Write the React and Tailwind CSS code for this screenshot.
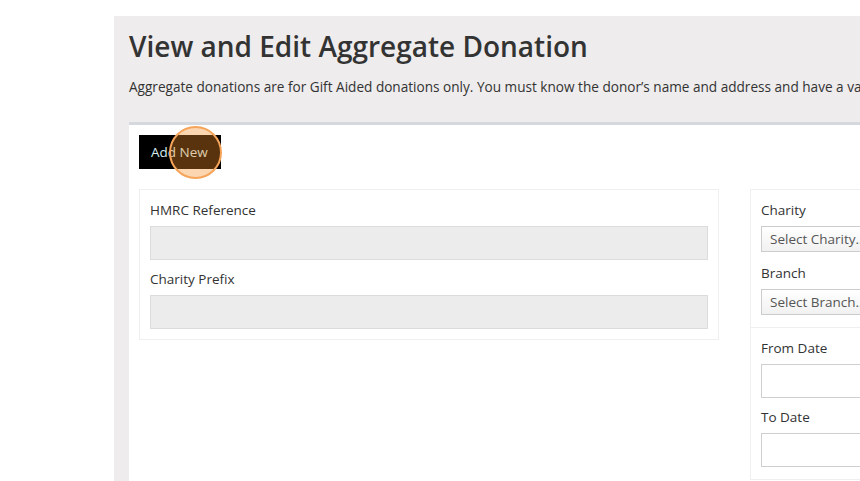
import React from 'react'

function Field({ label, children, first }) {
  return (
    <div className={first ? '' : 'mt-[9px]'}>
      <div className="text-[13.5px] leading-[20px] text-[#333]">{label}</div>
      <div className="mt-[6px]">{children}</div>
    </div>
  )
}

function GreyInput() {
  return <div className="h-[34px] bg-[#ececec] border border-[#dcdcdc]" />
}

function WhiteInput() {
  return <div className="h-[34px] w-[280px] bg-white border border-[#cfcfcf]" />
}

function SelectBox({ text }) {
  return (
    <div className="h-[26px] w-[280px] border border-[#cccccc] bg-gradient-to-b from-white to-[#f1f1f1] pl-[8px] text-[13.5px] leading-[24px] text-[#555]">
      {text}
    </div>
  )
}

export default function App() {
  return (
    <div
      className="w-[860px] h-[481px] overflow-hidden bg-white"
      style={{ fontFamily: '"Open Sans", "Liberation Sans", sans-serif' }}
    >
      <div className="ml-[114px] mt-[16px] w-[900px] h-[500px] bg-[#eeecec] pt-[12px] pl-[15px]">
        {/* Header */}
        <h1 className="text-[28px] leading-[36px] font-semibold text-[#333]">
          View and Edit Aggregate Donation
        </h1>
        <p className="mt-[14px] text-[13.6px] leading-[18px] text-[#333] whitespace-nowrap">
          Aggregate donations are for Gift Aided donations only. You must know the donor’s name and address and have a valid Gift Aid declaration.
        </p>

        {/* Content */}
        <div className="mt-[26px] h-[400px] bg-white border-t-[3px] border-[#d5d8dd] pl-[10px] pt-[10px]">
          <div className="relative w-[82px] h-[34px] bg-black text-[13.5px] leading-[34px] text-[#d6eef2] pl-[12px]">
            Add New
            <span className="absolute left-[30px] top-[-9px] w-[53px] h-[53px] rounded-full bg-[rgba(245,140,40,0.36)] border-2 border-[#f5a45a]" />
          </div>

          <div className="mt-[20px] flex items-start">
            <div className="w-[580px] shrink-0 border border-[#efefef] px-[10px] pt-[10px] pb-[10px]">
              <Field label="HMRC Reference" first>
                <GreyInput />
              </Field>
              <Field label="Charity Prefix">
                <GreyInput />
              </Field>
            </div>

            <div className="ml-[31px] w-[300px] shrink-0">
              <div className="border border-[#efefef] px-[10px] pt-[10px] pb-[12px]">
                <Field label="Charity" first>
                  <SelectBox text="Select Charity..." />
                </Field>
                <div className="mt-[11px]">
                  <div className="text-[13.5px] leading-[20px] text-[#333]">Branch</div>
                  <div className="mt-[6px]">
                    <SelectBox text="Select Branch..." />
                  </div>
                </div>
              </div>
              <div className="border border-t-0 border-[#efefef] px-[10px] pt-[10px] pb-[12px]">
                <Field label="From Date" first>
                  <WhiteInput />
                </Field>
                <Field label="To Date">
                  <WhiteInput />
                </Field>
              </div>
            </div>
          </div>
        </div>
      </div>
    </div>
  )
}
